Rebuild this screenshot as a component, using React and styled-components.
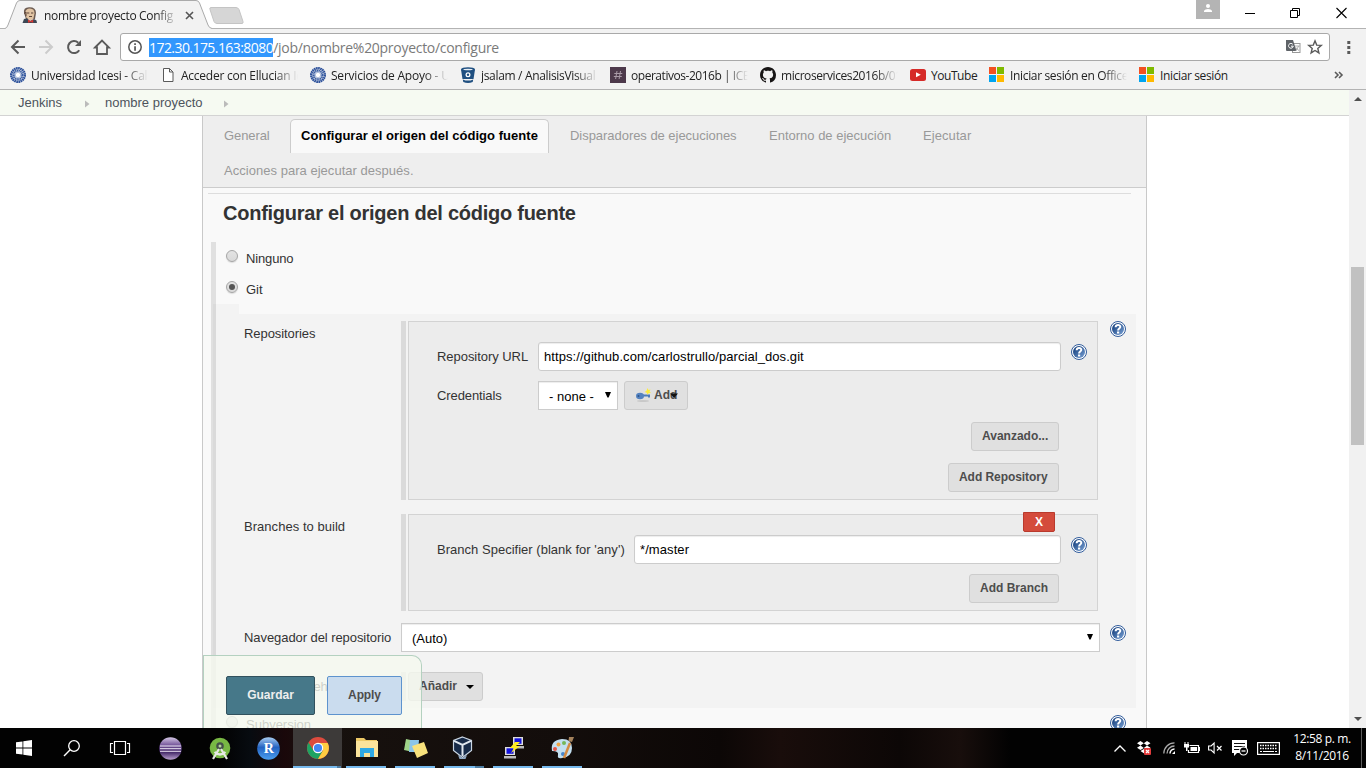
import React from 'react';
import styled, { createGlobalStyle, css } from 'styled-components';

const Global = createGlobalStyle`
  *{box-sizing:border-box}
  body{margin:0;background:#fff;overflow:hidden}
  button,input,select{margin:0;font:inherit}
`;
const ui = '"Open Sans","Noto Sans",sans-serif';
const sans = '"Liberation Sans",Arial,sans-serif';

const Screen = styled.div`width:1366px;height:768px;display:flex;flex-direction:column;overflow:hidden;`;
const Svg = styled.svg`display:block;flex:none;overflow:visible;margin-left:${p => p.$ml || 0}px;margin-top:${p => p.$mt || 0}px;`;

/* ---- browser window ---- */
const TabStrip = styled.div`height:29px;flex:none;display:flex;background:#fff;position:relative;border-bottom:1px solid #b3b3b3;`;
const TabShape = styled.svg`position:absolute;left:0;top:0;`;
const TabContent = styled.div`position:relative;display:flex;align-items:center;width:1196px;height:29px;padding-left:22px;font:12px ${ui};color:#222;`;
const TabTitle = styled.div`width:131px;margin:1px 7px 0 6px;overflow:hidden;white-space:nowrap;letter-spacing:${p => p.$ls}px;mask-image:linear-gradient(90deg,#000 112px,transparent 134px);`;
const UserBadge = styled.div`width:24px;height:19px;background:#b4b4b4;display:flex;justify-content:center;`;
const WinControls = styled.div`display:flex;margin:7px 0 0 25px;gap:34px;`;
const Toolbar = styled.div`height:36px;flex:none;background:#f2f2f2;display:flex;padding:4px 0 0 9px;`;
const NavIcons = styled.div`display:flex;width:111px;padding-top:5px;gap:10px;`;
const Omnibox = styled.div`width:1210px;height:28px;border:1px solid #a9a9a9;border-radius:3px;background:#fff;display:flex;align-items:center;padding:0 6px;`;
const Url = styled.div`flex:1;font:14px ${ui};color:#7a7a7a;margin-left:6px;white-space:nowrap;letter-spacing:${p => p.$ls}px;`;
const Selected = styled.span`display:inline-block;height:19px;line-height:19px;background:#3297fd;color:#fff;letter-spacing:${p => p.$ls}px;`;
const Bookmarks = styled.div`height:25px;flex:none;background:#f2f2f2;border-bottom:1px solid #b3b3b3;display:flex;font:12px ${ui};color:#222;padding-left:10px;`;
const Bookmark = styled.div`display:flex;flex:none;width:${p => p.$w}px;align-items:center;height:20px;`;
const BookmarkText = styled.span`width:${p => p.$tw}px;margin-left:${p => p.$g ?? 5}px;white-space:nowrap;overflow:hidden;letter-spacing:${p => p.$ls || 0}px;
  ${p => p.$fade && css`mask-image:linear-gradient(90deg,#000 calc(100% - 24px),transparent);`}`;

/* ---- page ---- */
const Viewport = styled.div`height:638px;flex:none;display:flex;position:relative;`;
const Page = styled.div`width:1349px;height:638px;overflow:hidden;font:13px/16px ${sans};color:#333;background:#fff;`;
const Breadcrumb = styled.div`height:26px;background:#f6faf2;border-bottom:1px solid #d3d3d3;display:flex;align-items:center;padding-left:18px;color:#4d545d;`;
const Crumb = styled.span`width:${p => p.$w}px;letter-spacing:${p => p.$ls || 0}px;white-space:nowrap;`;
const Panel = styled.div`margin-left:202px;width:945px;height:640px;background:#f9f9f9;border:solid #c9c9c9;border-width:0 1px;`;
const TabBar = styled.div`height:72px;background:#eee;border-bottom:1px solid #ccc;display:flex;flex-wrap:wrap;align-content:flex-start;padding:3px 0 0 10px;`;
const ConfigTab = styled.div`height:34px;padding:8px 10px 0;margin-right:10px;border:1px solid transparent;border-bottom:0;border-radius:5px 5px 0 0;color:#999;white-space:nowrap;width:${p => p.$w}px;letter-spacing:${p => p.$ls || 0}px;margin-bottom:1px;
  ${p => p.$active && css`background:#f9f9f9;border-color:#ccc;color:#000;font-weight:bold;`}`;
const Rule = styled.div`height:1px;background:#ddd;margin:5px 15px 0 5px;`;
const Heading = styled.h2`margin:8px 0 0 20px;font:bold 20px/23px ${sans};letter-spacing:-.25px;color:#333;`;
const Options = styled.div`margin:17px 0 0 8px;border-left:5px solid #e0e0e0;height:600px;`;
const RadioRow = styled.div`display:flex;align-items:center;height:31px;padding-left:10px;`;
const Radio = styled.span`width:12px;height:12px;margin-top:-3px;border-radius:50%;border:1px solid #a5a5a5;background:linear-gradient(#e3e3e3,#d9d9d9);display:flex;align-items:center;justify-content:center;box-shadow:0 1px 1px #ddd;
  ${p => p.$on && css`&::after{content:'';width:6px;height:6px;border-radius:50%;background:#555;}`}`;
const RadioLabel = styled.span`margin-left:8px;padding-top:3px;letter-spacing:${p => p.$ls || 0}px;`;
const BlockNotch = styled.div`width:26px;height:10px;margin-left:-3px;background:#f3f3f3;border-left:3px solid #dadada;`;
const GitBlock = styled.div`width:923px;height:394px;margin-left:-3px;border-left:3px solid #dadada;background:#f3f3f3;padding:7px 0 0 28px;`;
const Entry = styled.div`display:flex;height:${p => p.$h}px;margin-bottom:${p => p.$mb || 0}px;`;
const EntryLabel = styled.div`flex:none;width:157px;white-space:nowrap;letter-spacing:${p => p.$ls || 0}px;padding-top:${p => p.$pt}px;`;
const Stripe = styled.div`flex:none;width:5px;height:100%;background:#dadada;margin-right:2px;`;
const Box = styled.div`position:relative;flex:none;width:690px;background:#ececec;border:1px solid #d3d3d3;padding:20px 18px 0 28px;`;
const Field = styled.div`display:flex;height:29px;margin-bottom:10px;`;
const FieldLabel = styled.label`flex:none;width:${p => p.$w}px;padding-top:7px;white-space:nowrap;letter-spacing:${p => p.$ls || 0}px;`;
const TextInput = styled.input`flex:none;width:${p => p.$w}px;height:29px;border:1px solid #ccc;border-radius:3px;box-shadow:inset 0 1px 1px rgba(0,0,0,.075);padding:0 5px;color:#000;background:#fff;letter-spacing:${p => p.$ls || 0}px;outline:0;`;
const Picker = styled.div`flex:none;width:${p => p.$w}px;height:29px;border:1px solid #ccc;box-shadow:inset 0 1px 1px rgba(0,0,0,.075);background:#fff;color:#000;display:flex;justify-content:space-between;padding:7px 6px 0 10px;letter-spacing:${p => p.$ls || 0}px;`;
const Actions = styled.div`display:flex;justify-content:flex-end;padding-right:20px;height:29px;margin-top:${p => p.$mt}px;`;
const Button = styled.button`position:relative;width:${p => p.$w}px;height:29px;border:1px solid #ccc;border-radius:3px;background:#e0e0e0;color:#4d4d4d;font:bold 12px/14px ${sans};padding:0 0 1px 10px;display:flex;align-items:center;white-space:nowrap;letter-spacing:${p => p.$ls || 0}px;margin-left:${p => p.$ml || 0}px;`;
const AddCaret = styled.svg`position:absolute;right:9px;top:11px;`;
const DeleteButton = styled.button`position:absolute;left:614px;top:-3px;width:32px;height:20px;border:1px solid #b93a2d;border-radius:0 0 2px 2px;background:#d44b3c;color:#fff;font:bold 12px/16px ${sans};padding:0;`;
const HelpSlot = styled.div`margin:${p => p.$mt}px 0 0 ${p => p.$ml}px;`;
const SubversionRow = styled.div`display:flex;justify-content:space-between;width:910px;`;
const SaveBar = styled.div`position:absolute;left:203px;top:565px;width:219px;height:73px;background:rgba(245,249,239,.8);border:1px solid #b4d1c0;border-bottom:0;border-radius:0 10px 0 0;padding:20px 0 0 22px;display:flex;gap:12px;`;
const SaveButton = styled.button`width:${p => p.$w}px;height:39px;border-radius:2px;font:bold 12px ${sans};padding:0 0 1px;letter-spacing:${p => p.$ls || 0}px;
  ${p => p.$primary ? css`background:#467889;border:1px solid #31515d;color:#eee;` : css`background:#cadcee;border:1px solid #5d93ce;color:#4d4d4d;`}`;
const Scrollbar = styled.div`width:17px;background:#f1f1f1;display:flex;flex-direction:column;align-items:center;padding:7px 0 6px;`;
const Thumb = styled.div`width:13px;height:178px;background:#c1c1c1;margin:166px 0 272px;`;

/* ---- taskbar ---- */
const Taskbar = styled.div`height:40px;flex:none;display:flex;background:linear-gradient(90deg,#020202 0,#020202 220px,#070b10 250px,#1a080a 285px,#17110e 310px,#130d0b 560px,#0c0706 720px,#190d0b 780px,#0c0706 900px,#180e0c 960px,#020202 1010px);`;
const TaskItem = styled.div`width:${p => p.$w || 49}px;margin-right:${p => p.$mr || 0}px;height:40px;display:flex;align-items:center;justify-content:center;background-color:${p => (p.$active ? '#3d3a39' : 'transparent')};
  ${p => p.$open && css`background-image:linear-gradient(90deg,#76b9ed ${p.$split || 40}px,#4e7ea3 ${p.$split || 40}px);background-size:${p.$line || 40}px 2px;background-repeat:no-repeat;background-position:${p.$lx ?? 4}px 38px;`}`;
const Tray = styled.div`display:flex;align-items:center;margin-left:auto;`;
const Clock = styled.div`width:76px;margin:-2px 1px 0 4px;text-align:center;color:#fff;font:12px/17px ${ui};letter-spacing:-.35px;white-space:nowrap;`;
const ShowDesktop = styled.div`width:5px;height:40px;border-left:1px solid #5c5c5c;`;

const HelpIcon = () => (
  <Svg width="16" height="16" viewBox="0 0 16 16">
    <defs><linearGradient id="hg" x1="0" y1="0" x2="1" y2="1"><stop offset=".2" stopColor="#204a87" /><stop offset="1" stopColor="#7ba3d6" /></linearGradient></defs>
    <circle cx="8" cy="8" r="7.5" fill="#fff" stroke="#315c9c" />
    <circle cx="8" cy="8" r="6" fill="url(#hg)" />
    <path d="M5.600 6.200C5.800 3.200 10.500 3.300 10.300 6c-.1 1.500-2.200 1.600-2.200 3.400" fill="none" stroke="#fff" strokeWidth="2" />
    <rect x="7" y="10.500" width="2.200" height="2" fill="#fff" />
  </Svg>
);
const Help = ({ mt, ml }) => <HelpSlot $mt={mt} $ml={ml}><HelpIcon /></HelpSlot>;

const Caret = ({ mt = 0, ml = 0 }) => <Svg width="6" height="6" $mt={mt} $ml={ml}><path d="M0 0h6L3.600 5.500H2.400z" fill="#000" /></Svg>;

const Icesi = () => (
  <Svg width="16" height="16" viewBox="0 0 16 16">
    <circle cx="8" cy="8" r="6.800" fill="none" stroke="#2d519b" strokeWidth="2.400" strokeDasharray="1.700 .430" />
    <circle cx="8" cy="8" r="4.400" fill="none" stroke="#3c60a6" strokeWidth="2.200" strokeDasharray="1.300 .430" />
    <circle cx="8" cy="8" r="2.700" fill="#fff" stroke="#7f97c8" strokeWidth=".6" />
  </Svg>
);
const FileIcon = () => <Svg width="16" height="16"><path d="M3.500 1.500h6l3.500 3.500v9.500H3.500zM9.500 1.500V5H13" fill="#fff" stroke="#5a5a5a" /></Svg>;
const Bucket = () => (
  <Svg width="16" height="16">
    <path d="M1 2.500 2.500 12h11L15 2.500z" fill="#205081" /><ellipse cx="8" cy="2.500" rx="7" ry="2.300" fill="#205081" />
    <ellipse cx="8" cy="2.500" rx="4.800" ry=".8" fill="#e8eef5" /><circle cx="8" cy="7.800" r="2.500" fill="#fff" /><circle cx="8" cy="7.800" r="1.200" fill="#205081" />
    <path d="M2.800 12.400q5.200 2.400 10.400 0l-.5 2.600q-4.700 2-9.400 0z" fill="#205081" />
  </Svg>
);
const HashIcon = () => <Svg width="16" height="16"><path d="M0 0h16v16H0z" fill="#4d394b" /><path d="M7 4 5.600 12M10.500 4 9.100 12M4.300 6.500h8M3.800 9.500h8" stroke="#a99aa7" fill="none" /></Svg>;
const GitHub = () => <Svg width="16" height="16" viewBox="0 0 16 16"><path fill="#181616" d="M8 0C3.58 0 0 3.58 0 8c0 3.54 2.29 6.53 5.47 7.59.4.07.55-.17.55-.38 0-.19-.01-.82-.01-1.49-2.01.37-2.53-.49-2.69-.94-.09-.23-.48-.94-.82-1.13-.28-.15-.68-.52-.01-.53.63-.01 1.08.58 1.23.82.72 1.21 1.87.87 2.33.66.07-.52.28-.87.51-1.07-1.78-.2-3.64-.89-3.64-3.95 0-.87.31-1.59.82-2.15-.08-.2-.36-1.02.08-2.12 0 0 .67-.21 2.2.82.64-.18 1.32-.27 2-.27s1.36.09 2 .27c1.53-1.04 2.2-.82 2.2-.82.44 1.1.16 1.92.08 2.12.51.56.82 1.27.82 2.15 0 3.07-1.87 3.75-3.65 3.95.29.25.54.73.54 1.48 0 1.07-.01 1.93-.01 2.2 0 .21.15.46.55.38A8.01 8.01 0 0 0 16 8c0-4.42-3.58-8-8-8z" /></Svg>;
const YouTube = () => <Svg width="16" height="16"><rect y="2" width="16" height="12" rx="2.500" fill="#d62a28" /><path d="M6 5.300v5L10.800 7.800z" fill="#fff" /></Svg>;
const MsLogo = () => <Svg width="16" height="16"><path fill="#f25022" d="M0 0h7v7H0z" /><path fill="#7fba00" d="M8 0h7v7H8z" /><path fill="#00a4ef" d="M0 8h7v7H0z" /><path fill="#ffb900" d="M8 8h7v7H8z" /></Svg>;
const Butler = () => (
  <Svg width="16" height="16">
    <path d="M2 6Q1 .5 7 .2 14 0 14 6l-1 6H4z" fill="#6b5a50" /><path d="M3.300 5Q4 1.400 8 1.500q4.600.2 4.500 5L11.300 12l-3 1.600L4.500 11z" fill="#e0c3a2" />
    <path d="M2 6.500 4 5v4M5 6h2.300M9 6h2.300M7 9.500h3" stroke="#5c4438" fill="none" /><path d="M.5 16 2 12l3-.8L8 14l4-2 2.500 1.500.5 2.500z" fill="#3c4754" /><path d="m6 12.500 2.600 1.600 2.600-1.600v3.200L8.600 15 6 15.700z" fill="#d33833" />
  </Svg>
);

const bookmarks = [
  { icon: <Icesi />, text: 'Universidad Icesi - Cali', w: 150, tw: 117, fade: true, ls: -0.24 },
  { icon: <FileIcon />, text: 'Acceder con Ellucian Id', w: 150, tw: 117, fade: true, ls: -0.25 },
  { icon: <Icesi />, text: 'Servicios de Apoyo - Un', w: 150, tw: 117, fade: true, ls: -0.22 },
  { icon: <Bucket />, text: 'jsalam / AnalisisVisual', w: 150, tw: 117, fade: true, ls: -0.33 },
  { icon: <HashIcon />, text: 'operativos-2016b | ICE', w: 150, tw: 117, fade: true, ls: -0.46 },
  { icon: <GitHub />, text: 'microservices2016b/01', w: 150, tw: 117, fade: true, ls: -0.42 },
  { icon: <YouTube />, text: 'YouTube', w: 79, tw: 58, ls: -0.45 },
  { icon: <MsLogo />, text: 'Iniciar sesión en Office', w: 150, tw: 117, fade: true, ls: -0.34 },
  { icon: <MsLogo />, text: 'Iniciar sesión', w: 185, tw: 90, ls: -0.37 },
];

function Browser() {
  return (
    <>
      <TabStrip>
        <TabShape width="260" height="30">
          <path d="M5 28.500 Q7 28 8 25 L16.500 3 Q17.500 .5 20 .5 H196 Q198.500 .5 199.500 3 L208 25 Q209 28 212 28.500 V30H5z" fill="#f2f2f2" />
          <path d="M5 28.500Q7 28 8 25L16.500 3Q17.500 .5 20 .5H196Q198.500 .5 199.500 3L208 25Q209 28 212 28.500" fill="none" stroke="#aaa" />
          <path d="M211 7.500h25q2 0 3 2l4 12q.5 2-1 2h-25q-2 0-3-2l-4-12q-.7-2 1-2z" fill="#d6d6d6" stroke="#c4c4c4" />
        </TabShape>
        <TabContent>
          <Butler /><TabTitle $ls={-0.33}>nombre proyecto Config</TabTitle>
          <Svg width="9" height="9" $mt={1} $ml={3}><path d="m1 1 7 7M8 1 1 8" stroke="#555" strokeWidth="1.600" /></Svg>
        </TabContent>
        <UserBadge><Svg width="8" height="9" $mt={4}><circle cx="4" cy="2" r="2" fill="#fff" /><path d="M0 8V6.800Q1 5 4 5t4 1.800V8z" fill="#fff" /></Svg></UserBadge>
        <WinControls>
          <Svg width="11" height="12"><path d="M0 6.500h10" stroke="#000" /></Svg>
          <Svg width="11" height="12"><path d="M.5 3.500h7v7h-7zM2.500 3.500v-2h7v7h-2" fill="none" stroke="#000" /></Svg>
          <Svg width="11" height="12" $ml={1}><path d="m.5 1 10 10M10.500 1l-10 10" stroke="#000" strokeWidth="1.100" /></Svg>
        </WinControls>
      </TabStrip>
      <Toolbar>
        <NavIcons>
          <Svg width="18" height="18"><path d="M16 9H4M9.500 2.500 3 9l6.500 6.500" fill="none" stroke="#5a5a5a" strokeWidth="2" /></Svg>
          <Svg width="18" height="18"><path d="M2 9h12M8.500 2.500 15 9l-6.500 6.500" fill="none" stroke="#ccc" strokeWidth="2" /></Svg>
          <Svg width="18" height="18"><path d="M14.200 12.200a6 6 0 1 1-1-7.500" fill="none" stroke="#5a5a5a" strokeWidth="2" /><path d="M16 2v6h-6z" fill="#5a5a5a" /></Svg>
          <Svg width="18" height="18"><path d="M2 9.500 9 2.500l7 7h-2V16H4V9.500z" fill="none" stroke="#5a5a5a" strokeWidth="1.800" /></Svg>
        </NavIcons>
        <Omnibox>
          <Svg width="16" height="16"><circle cx="8" cy="8" r="6.200" fill="none" stroke="#555" strokeWidth="1.500" /><path d="M7.200 4.300h1.700v1.700H7.200zM7.200 7.200h1.700v4.500H7.200z" fill="#555" /></Svg>
          <Url $ls={-0.29}><Selected $ls={-0.56}>172.30.175.163:8080</Selected>/job/nombre%20proyecto/configure</Url>
          <Svg width="15" height="14"><rect x="6.500" y="3.500" width="7.500" height="9" fill="#fff" stroke="#999" /><path d="M0 0h7l3.500 11H1Q0 11 0 10z" fill="#5f6368" /><path d="M6.800 4.300a2.400 2.400 0 1 0 .5 1.900H5" fill="none" stroke="#fff" /><path d="M9 6h4.500M12.500 6q-.8 3-3 4.500M10 7.500q1 2 3 3" fill="none" stroke="#999" strokeWidth=".8" /></Svg>
          <Svg width="16" height="16" $ml={6}><path d="m8 1.800 1.700 4.300 4.600.3-3.500 3 1.100 4.500L8 11.500l-3.900 2.400 1.100-4.500-3.500-3 4.600-.3z" fill="none" stroke="#5a5a5a" strokeWidth="1.400" /></Svg>
        </Omnibox>
        <Svg width="4" height="14" $ml={17} $mt={8}><path d="M.3 0h3v3h-3zM.3 5h3v3h-3zM.3 10h3v3h-3z" fill="#5a5a5a" /></Svg>
      </Toolbar>
      <Bookmarks>
        {bookmarks.map((b, i) => (
          <Bookmark key={i} $w={b.w}>{b.icon}<BookmarkText $tw={b.tw} $fade={b.fade} $ls={b.ls}>{b.text}</BookmarkText></Bookmark>
        ))}
        <Svg width="9" height="8" $mt={6} $ml={10}><path d="m1 1 3 3-3 3M5 1l3 3-3 3" fill="none" stroke="#5a5a5a" strokeWidth="1.600" /></Svg>
      </Bookmarks>
    </>
  );
}

const CrumbArrow = () => <Svg width="5" height="8" $mt={2}><path d="M0 .5v7L4.500 4z" fill="#bbb" /></Svg>;

function Jenkins() {
  return (
    <Viewport>
      <Page>
        <Breadcrumb>
          <Crumb $w={67}>Jenkins</Crumb><CrumbArrow /><Crumb $w={15} /><Crumb $w={119}>nombre proyecto</Crumb><CrumbArrow />
        </Breadcrumb>
        <Panel>
          <TabBar>
            <ConfigTab $w={67} $ls={-0.1}>General</ConfigTab>
            <ConfigTab $w={259} $active $ls={0.04}>Configurar el origen del código fuente</ConfigTab>
            <ConfigTab $w={189} $ls={-0.04}>Disparadores de ejecuciones</ConfigTab>
            <ConfigTab $w={144}>Entorno de ejecución</ConfigTab>
            <ConfigTab $w={120} $ls={0.08}>Ejecutar</ConfigTab>
            <ConfigTab $w={250} $ls={0.03}>Acciones para ejecutar después.</ConfigTab>
          </TabBar>
          <Rule />
          <Heading>Configurar el origen del código fuente</Heading>
          <Options>
            <RadioRow><Radio /><RadioLabel $ls={-0.15}>Ninguno</RadioLabel></RadioRow>
            <RadioRow><Radio $on /><RadioLabel>Git</RadioLabel></RadioRow>
            <BlockNotch />
            <GitBlock>
              <Entry $h={179} $mb={14}>
                <EntryLabel $pt={5} $ls={-0.07}>Repositories</EntryLabel>
                <Stripe />
                <Box>
                  <Field><FieldLabel $w={101} $ls={-0.05}>Repository URL</FieldLabel><TextInput $w={523} $ls={0.07} readOnly value="https://github.com/carlostrullo/parcial_dos.git" /><Help mt={2} ml={10} /></Field>
                  <Field>
                    <FieldLabel $w={101} $ls={-0.1}>Credentials</FieldLabel>
                    <Picker $w={80}>- none -<Caret mt={3} /></Picker>
                    <Button $w={64} $ml={6}>
                      <Svg width="19" height="16"><ellipse cx="8" cy="14" rx="6" ry="1" fill="#c8c8c8" /><path d="M5 7.500h10v3H13v-1H5z" fill="#4c7cba" /><ellipse cx="5" cy="9" rx="4" ry="3.300" fill="#5483c0" /><circle cx="3.500" cy="9" r="1" fill="#2e5488" /><path d="m12.500 1 1 2 2-.5-1 2 1.500 1.500-2.500.2-1 1.500-.8-2-2-.7 1.800-1.200z" fill="#fcec3c" /></Svg>
                      Add<AddCaret width="8" height="5"><path d="M0 .5h8L4 5z" fill="#111" /></AddCaret>
                    </Button>
                  </Field>
                  <Actions $mt={12}><Button $w={88}>Avanzado...</Button></Actions>
                  <Actions $mt={12}><Button $w={111} $ls={-0.06}>Add Repository</Button></Actions>
                </Box>
                <Help mt={0} ml={12} />
              </Entry>
              <Entry $h={97} $mb={12}>
                <EntryLabel $pt={5} $ls={0.04}>Branches to build</EntryLabel>
                <Stripe />
                <Box>
                  <DeleteButton>X</DeleteButton>
                  <Field><FieldLabel $w={197} $ls={0.02}>Branch Specifier (blank for 'any')</FieldLabel><TextInput $w={427} $ls={0.08} readOnly value="*/master" /><Help mt={2} ml={10} /></Field>
                  <Actions $mt={10}><Button $w={90}>Add Branch</Button></Actions>
                </Box>
              </Entry>
              <Entry $h={29} $mb={20}>
                <EntryLabel $pt={7} $ls={-0.07}>Navegador del repositorio</EntryLabel>
                <Picker $w={699}>(Auto)<Caret mt={3} /></Picker>
                <Help mt={2} ml={10} />
              </Entry>
              <Entry $h={29}>
                <EntryLabel $pt={7}>Additional Behaviours</EntryLabel>
                <Stripe />
                <Button $w={75}>Añadir<Svg width="8" height="4" $ml={9} $mt={2}><path d="M0 0h8L4 4z" fill="#000" /></Svg></Button>
              </Entry>
            </GitBlock>
            <SubversionRow><RadioRow><Radio /><RadioLabel>Subversion</RadioLabel></RadioRow><Help mt={7} ml={0} /></SubversionRow>
          </Options>
        </Panel>
      </Page>
      <SaveBar><SaveButton $w={89} $primary>Guardar</SaveButton><SaveButton $w={75} $ls={-0.1}>Apply</SaveButton></SaveBar>
      <Scrollbar>
        <Svg width="8" height="4"><path d="M0 4h8L4 0z" fill="#505050" /></Svg>
        <Thumb />
        <Svg width="8" height="4"><path d="M0 0h8L4 4z" fill="#505050" /></Svg>
      </Scrollbar>
    </Viewport>
  );
}

const Chrome = () => <Svg width="22" height="22" viewBox="0 0 22 22"><circle cx="11" cy="11" r="11" fill="#dd4b3e" /><path d="M1.500 5.500A11 11 0 0 0 11 22l5-8.500-5 2.500-4.500-2.500z" fill="#1da362" /><path d="M20.700 6H11l5 7.500L11 22A11 11 0 0 0 20.700 6z" fill="#ffcd41" /><circle cx="11" cy="11" r="5.200" fill="#fff" /><circle cx="11" cy="11" r="4.100" fill="#4486f4" /></Svg>;
const monitor = (x, y) => <g transform={`translate(${x} ${y})`}><path d="M0 0h10v8H0z" fill="#ddd" /><path d="M1.500 1.300h7v5.500h-7z" fill="#1313dd" /><path d="M-1 9h12v2.500H-1z" fill="#bbb" /></g>;

function Tasks() {
  return (
    <Taskbar>
      <TaskItem $w={48}><Svg width="16" height="16"><path fill="#fff" d="M0 2.300 6.500 1.400v6.200H0zM7.300 1.300 16 0v7.600H7.300zM0 8.400h6.500v6.200L0 13.700zM7.300 8.400H16V16l-8.700-1.200z" /></Svg></TaskItem>
      <TaskItem $w={48}><Svg width="16" height="16"><circle cx="10" cy="6" r="5.300" fill="none" stroke="#fff" strokeWidth="1.300" /><path d="M6.200 9.800 0 16" stroke="#fff" strokeWidth="1.400" /></Svg></TaskItem>
      <TaskItem $w={48} $mr={2}><Svg width="20" height="14"><path d="M4.500.5h11v13h-11zM3 2.500H.5v9H3M17 2.500h2.500v9H17" fill="none" stroke="#fff" strokeWidth="1.200" /></Svg></TaskItem>
      <TaskItem><Svg width="23" height="23"><defs><linearGradient id="ec" x1="0" y1="0" x2="0" y2="1"><stop stopColor="#d5c8e6" /><stop offset=".35" stopColor="#76579b" /><stop offset=".65" stopColor="#3f2464" /><stop offset="1" stopColor="#bca3d1" /></linearGradient></defs><circle cx="11.500" cy="11.500" r="11.300" fill="url(#ec)" /><path d="M1 9h21M1 11.700h21M1 14.300h21" stroke="#eee8f6" strokeWidth="1" /></Svg></TaskItem>
      <TaskItem><Svg width="22" height="23"><circle cx="11" cy="11" r="10.300" fill="#78b844" /><circle cx="11" cy="9" r="3.800" fill="#455149" /><circle cx="11" cy="9" r="1.500" fill="#b6d79c" /><path d="m10 12-6 10M12 12l6 10M5.500 15q5.500 5 11 0" fill="none" stroke="#e7e9e4" strokeWidth="2.200" /></Svg></TaskItem>
      <TaskItem><Svg width="23" height="23"><defs><linearGradient id="rg" x1="0" y1="0" x2="0" y2="1"><stop stopColor="#a9cdf2" /><stop offset=".45" stopColor="#2463c2" /><stop offset="1" stopColor="#4b9ff0" /></linearGradient></defs><circle cx="11.500" cy="11.500" r="11.300" fill="url(#rg)" /><text x="11.800" y="16" textAnchor="middle" fontFamily="Liberation Serif" fontWeight="bold" fontSize="14" fill="#fff">R</text></Svg></TaskItem>
      <TaskItem $active $open $lx={0} $line={48} $split={44}><Chrome /></TaskItem>
      <TaskItem $open><Svg width="22" height="20"><path d="M0 2V0h8l2 2h11v17H0z" fill="#edc967" /><path d="M0 3h22v16H0z" fill="#fbe39b" /><path d="M4 19v-9h14v9h-4v-4H8v4z" fill="#2fa9e5" /></Svg></TaskItem>
      <TaskItem $open><Svg width="24" height="20"><path d="m2 1 9 2-2 11-9-2z" fill="#9fd489" /><path d="M6 2h9l-1 12H5z" fill="#8bc5e9" /><path d="m8 8 12-4 4 11-11 5z" fill="#f8e17c" /></Svg></TaskItem>
      <TaskItem $open $split={31}><Svg width="20" height="24" $ml={-3}><path d="m9.500 1 9 3.500v10l-9 7-9-7v-10z" fill="#172b49" stroke="#c9d6e3" strokeWidth="1.200" /><path d="m1 4.800 8.500 4 8.500-4M9.500 8.800V20" fill="none" stroke="#dfe7ef" strokeWidth="2" /><path d="m5 19 4.500 3 4.500-3-1.500 4h-6z" fill="#8fa8c4" /></Svg></TaskItem>
      <TaskItem $open><Svg width="22" height="22">{monitor(10, 0)}{monitor(2, 10)}<path d="m12 5-5 6h4l-3 5 9-7h-4l4-4z" fill="#ffec20" /></Svg></TaskItem>
      <TaskItem $open><Svg width="24" height="22"><path d="M11 2Q21 2 21 11T11 21Q6 22 7 18T1 14Q-1 3 11 2z" fill="#c3dff0" /><circle cx="4" cy="12" r="2" fill="#e45546" /><circle cx="7.500" cy="7.500" r="2" fill="#f1a545" /><circle cx="13" cy="6" r="2" fill="#75b858" /><circle cx="12" cy="17" r="2" fill="#4686cc" /><path d="m13 21 6-15" stroke="#d48a42" strokeWidth="2.500" /><path d="m17.500 4 .5-4h5l-2 5z" fill="#a4825c" /></Svg></TaskItem>
      <Tray>
        <Svg width="12" height="7"><path d="m.5 6.500 5.500-5.500 5.500 5.500" fill="none" stroke="#fff" strokeWidth="1.300" /></Svg>
        <Svg width="14" height="14" $ml={11}><path d="m3.500 0 3.300 2.200L3.500 4.500 0 2.200zM10 0l3.500 2.200L10 4.500 6.800 2.200zM3.500 4.500 6.800 7 3.500 9 0 6.800zM10 4.500l3.500 2.300L10 9 6.800 7zM3.500 10l3.300-2 3.300 2-3.300 2.200z" fill="#fff" /><rect x="7" y="7" width="7" height="7" rx="1" fill="#e23b3b" /><path d="m9 9 3 3M12 9l-3 3" stroke="#fff" strokeWidth="1.200" /></Svg>
        <Svg width="12" height="12" $ml={12}><path d="M.8 11.500A10.700 10.700 0 0 1 11.500 .8M4 11.500A7.500 7.500 0 0 1 11.500 4" fill="none" stroke="#aaa" strokeWidth="1.300" /><path d="M7 11.500A4.500 4.500 0 0 1 11.500 7" fill="none" stroke="#fff" strokeWidth="1.500" /><path d="M12 9v3H9z" fill="#fff" /></Svg>
        <Svg width="16" height="12" $ml={9}><path d="M5.500 3.500h9v7h-10V8" fill="none" stroke="#fff" strokeWidth="1.200" /><path d="M6.500 5h6.500v4H6.500zM15 5h1v4h-1zM0 2h5v3.500H3.500V9H2V5.500H0zM.5 0h1v2h-1zM3.500 0h1v2h-1z" fill="#fff" /></Svg>
        <Svg width="15" height="12" $ml={8}><path d="M.6 4h2.500l3-3v10l-3-3H.6z" fill="none" stroke="#fff" strokeWidth="1.100" /><path d="m9 4 4.500 4.500M13.500 4 9 8.500" stroke="#fff" strokeWidth="1.200" /></Svg>
        <Svg width="17" height="16" $ml={9}><path d="M0 0h15v9l-3 4H5l-3 3v-3H0z" fill="#fff" /><path d="M2 3.500h11M2 6.500h11M2 9.500h6" stroke="#111" strokeWidth="1.200" /><circle cx="11.500" cy="11" r="4" fill="#050505" stroke="#fff" strokeWidth="1.200" /><path d="M9.500 11h4" stroke="#fff" strokeWidth="1.300" /></Svg>
        <Svg width="23" height="13" $ml={8}><rect x=".6" y=".6" width="21.800" height="11.800" fill="none" stroke="#fff" strokeWidth="1.200" /><path d="M3 3.500h17M3 6.500h17" stroke="#fff" strokeDasharray="1.500 1" strokeWidth="1.500" /><path d="M3 9.500h2M6 9.500h11M18 9.500h2" stroke="#fff" /></Svg>
        <Clock>12:58 p. m.<br />8/11/2016</Clock>
        <ShowDesktop />
      </Tray>
    </Taskbar>
  );
}

export default function App() {
  return <><Global /><Screen><Browser /><Jenkins /><Tasks /></Screen></>;
}
